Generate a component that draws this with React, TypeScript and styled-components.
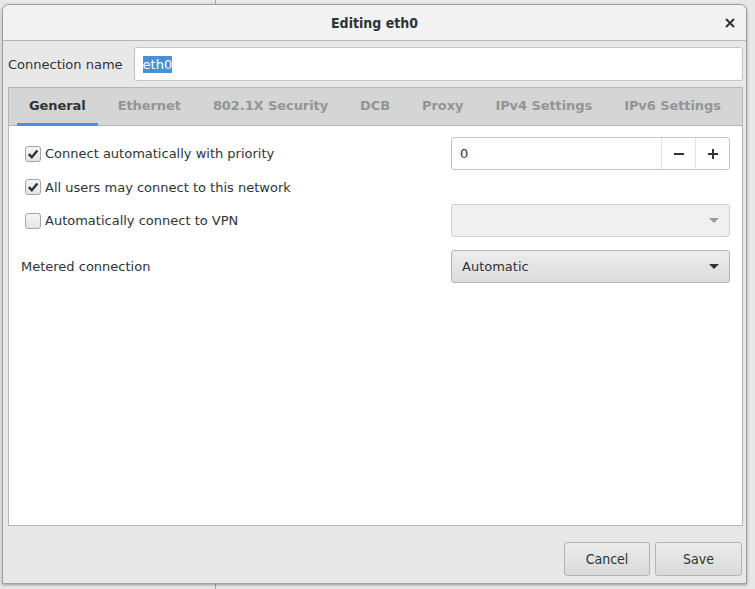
import React from "react";
import styled, { createGlobalStyle } from "styled-components";

const Global = createGlobalStyle`
  html, body { margin: 0; padding: 0; }
  body {
    width: 755px; height: 589px; overflow: hidden;
    background: #e3e3e3;
    font-family: "DejaVu Sans", "Noto Sans", sans-serif;
    font-size: 13px; color: #2e3436;
  }
`;

const Desktop = styled.div`
  position: relative;
  width: 755px; height: 589px;
  padding: 4px 0 0 2px;
  box-sizing: border-box;
  background: linear-gradient(to right, #e8e8e8 0 215px, #a9a9a9 215px 216px, #e8e8e8 216px);
`;

const Window = styled.div`
  width: 745px; height: 580px;
  display: flex; flex-direction: column;
  background: #e8e8e8;
  border: 1px solid #9f9f9f;
  border-radius: 7px 7px 0 0;
  box-sizing: border-box;
  box-shadow: 0 1px 3px rgba(0,0,0,0.35);
  overflow: hidden;
`;

const TitleBar = styled.div`
  height: 36px;
  flex: none;
  display: flex; align-items: center; justify-content: center;
  position: relative;
  background: #f2f2f2;
  border-bottom: 1px solid #b6b6b6;
  box-sizing: border-box;
`;

const Title = styled.div`
  font-weight: bold;
  font-stretch: condensed;
  font-family: "DejaVu Sans Condensed", "DejaVu Sans", sans-serif;
  font-size: 14px;
  color: #2e3436;
`;

const CloseBtn = styled.div`
  position: absolute;
  right: 8px; top: 10px;
  width: 16px; height: 16px;
  display: flex; align-items: center; justify-content: center;
`;

const Body = styled.div`
  flex: 1;
  display: flex; flex-direction: column;
  padding: 6px 3px 0 5px;
`;

const NameRow = styled.div`
  display: flex; align-items: center;
  height: 34px;
  gap: 11px;
`;

const Label = styled.span`
  color: #2e3436;
  white-space: nowrap;
`;

const TextEntry = styled.div`
  flex: 1;
  height: 34px;
  box-sizing: border-box;
  background: #fff;
  border: 1px solid #c4c4c4;
  border-radius: 3px;
  display: flex; align-items: center;
  padding: 0 8px;
`;

const Selected = styled.span`
  background: #4a90d9;
  color: #fff;
  padding: 1px 0;
`;

const Notebook = styled.div`
  margin-top: 6px;
  height: 439px;
  display: flex; flex-direction: column;
  border: 1px solid #b6b6b6;
  background: #fff;
  box-sizing: border-box;
`;

const TabBar = styled.div`
  height: 38px;
  flex: none;
  display: flex;
  gap: 8px;
  padding-left: 8px;
  background: #d5d5d5;
  border-bottom: 1px solid #b6b6b6;
  box-sizing: border-box;
`;

const Tab = styled.div<{ $active?: boolean }>`
  padding: 0 12px 3px;
  display: flex; align-items: center;
  font-weight: bold;
  letter-spacing: -0.08px;
  color: ${(p) => (p.$active ? "#2e3436" : "#929595")};
  box-shadow: ${(p) => (p.$active ? "inset 0 -3px 0 #4a90d9" : "none")};
  margin-bottom: -1px;
`;

const Page = styled.div`
  flex: 1;
  padding: 11px 12px 0 12px;
  display: flex; flex-direction: column;
`;

const Row = styled.div<{ $h: number; $gap?: number }>`
  display: flex; align-items: center; justify-content: space-between;
  height: ${(p) => p.$h}px;
  margin-top: ${(p) => p.$gap ?? 0}px;
`;

const Check = styled.label`
  display: flex; align-items: center; gap: 4px;
  padding-left: 4px;
  color: #2e3436;
`;

const Box = styled.span`
  width: 14px; height: 14px;
  border: 1px solid #a5a5a5;
  border-radius: 3px;
  background: linear-gradient(#f6f6f6, #e4e4e4);
  display: flex; align-items: center; justify-content: center;
`;

const Spin = styled.div`
  width: 279px; height: 33px;
  box-sizing: border-box;
  display: flex;
  background: #fff;
  border: 1px solid #c4c4c4;
  border-radius: 3px;
`;

const SpinText = styled.div`
  flex: 1;
  display: flex; align-items: center;
  padding-left: 8px;
`;

const SpinBtn = styled.div`
  width: 33px;
  border-left: 1px solid #e2e2e2;
  display: flex; align-items: center; justify-content: center;
`;

const Combo = styled.div<{ $disabled?: boolean }>`
  width: 279px; height: 33px;
  box-sizing: border-box;
  border: 1px solid ${(p) => (p.$disabled ? "#cfcfcf" : "#b4b4b4")};
  border-radius: 3px;
  background: ${(p) => (p.$disabled ? "#f0f0f0" : "linear-gradient(#ededed, #dcdcdc)")};
  display: flex; align-items: center; justify-content: space-between;
  padding: 0 10px;
  color: #2e3436;
`;

const Footer = styled.div`
  flex: 1;
  display: flex; justify-content: flex-end; align-items: flex-start;
  gap: 5px;
  padding: 16px 1px 0 0;
`;

const Button = styled.div<{ $w: number }>`
  width: ${(p) => p.$w}px; height: 34px;
  box-sizing: border-box;
  border: 1px solid #b4b4b4;
  border-radius: 3px;
  background: linear-gradient(#ececec, #dadada);
  display: flex; align-items: center; justify-content: center;
  font-family: "DejaVu Sans Condensed", "DejaVu Sans", sans-serif;
  font-stretch: condensed;
  font-size: 14px;
  color: #2e3436;
`;

const Tick = () => (
  <svg width="12" height="12" viewBox="0 0 12 12">
    <path d="M1.8 6.2 L4.8 9.2 L10.4 2.4" fill="none" stroke="#2e3436" strokeWidth="2.4" />
  </svg>
);

const Arrow = ({ c }: { c: string }) => (
  <svg width="10" height="6" viewBox="0 0 10 6">
    <path d="M0 0 H10 L5 5 Z" fill={c} />
  </svg>
);

export default function App() {
  return (
    <>
      <Global />
      <Desktop>
        <Window>
          <TitleBar>
            <Title>Editing eth0</Title>
            <CloseBtn>
              <svg width="10" height="10" viewBox="0 0 10 10">
                <path d="M1 1 L9 9 M9 1 L1 9" stroke="#2e3436" strokeWidth="2" />
              </svg>
            </CloseBtn>
          </TitleBar>
          <Body>
            <NameRow>
              <Label>Connection name</Label>
              <TextEntry>
                <Selected>eth0</Selected>
              </TextEntry>
            </NameRow>
            <Notebook>
              <TabBar>
                <Tab $active>General</Tab>
                <Tab>Ethernet</Tab>
                <Tab>802.1X Security</Tab>
                <Tab>DCB</Tab>
                <Tab>Proxy</Tab>
                <Tab>IPv4 Settings</Tab>
                <Tab>IPv6 Settings</Tab>
              </TabBar>
              <Page>
                <Row $h={33}>
                  <Check>
                    <Box><Tick /></Box>
                    Connect automatically with priority
                  </Check>
                  <Spin>
                    <SpinText>0</SpinText>
                    <SpinBtn>
                      <svg width="12" height="12" viewBox="0 0 12 12">
                        <path d="M1 6 H11" stroke="#2e3436" strokeWidth="2" />
                      </svg>
                    </SpinBtn>
                    <SpinBtn>
                      <svg width="12" height="12" viewBox="0 0 12 12">
                        <path d="M1 6 H11 M6 1 V11" stroke="#2e3436" strokeWidth="2" />
                      </svg>
                    </SpinBtn>
                  </Spin>
                </Row>
                <Row $h={34}>
                  <Check>
                    <Box><Tick /></Box>
                    All users may connect to this network
                  </Check>
                </Row>
                <Row $h={33}>
                  <Check>
                    <Box />
                    Automatically connect to VPN
                  </Check>
                  <Combo $disabled>
                    <span />
                    <Arrow c="#9a9a9a" />
                  </Combo>
                </Row>
                <Row $h={33} $gap={13}>
                  <Label>Metered connection</Label>
                  <Combo>
                    <span>Automatic</span>
                    <Arrow c="#2e3436" />
                  </Combo>
                </Row>
              </Page>
            </Notebook>
            <Footer>
              <Button $w={86}>Cancel</Button>
              <Button $w={87}>Save</Button>
            </Footer>
          </Body>
        </Window>
      </Desktop>
    </>
  );
}
